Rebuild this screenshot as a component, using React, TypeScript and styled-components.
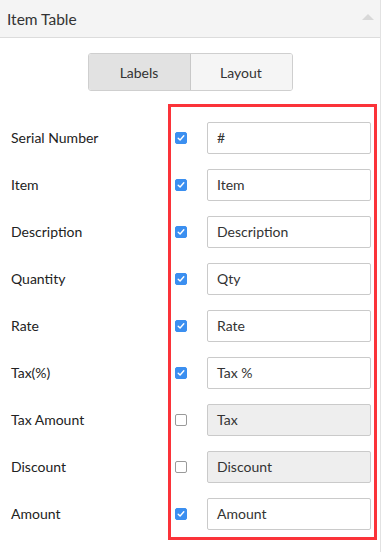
import { styled, createGlobalStyle } from "styled-components"

type Field = {
  label: string
  value: string
  enabled: boolean
}

const fields: Field[] = [
  { label: "Serial Number", value: "#", enabled: true },
  { label: "Item", value: "Item", enabled: true },
  { label: "Description", value: "Description", enabled: true },
  { label: "Quantity", value: "Qty", enabled: true },
  { label: "Rate", value: "Rate", enabled: true },
  { label: "Tax(%)", value: "Tax %", enabled: true },
  { label: "Tax Amount", value: "Tax", enabled: false },
  { label: "Discount", value: "Discount", enabled: false },
  { label: "Amount", value: "Amount", enabled: true },
]

const GlobalStyle = createGlobalStyle`
  body {
    margin: 0;
    background: #fff;
    font-family: Lato, "Open Sans", sans-serif;
    color: #222;
  }
`

const Panel = styled.div`
  width: 380px;
  min-height: 552px;
  border-right: 1px solid #e2e2e2;
  background: #fff;
`

const Header = styled.div`
  display: flex;
  align-items: center;
  justify-content: space-between;
  height: 37px;
  padding: 0 6px 0 7px;
  background: #f4f4f4;
  border-bottom: 1px solid #dcdcdc;
  font-size: 15.5px;
  color: #333;
`

const Caret = styled.span`
  width: 0;
  height: 0;
  border-left: 6px solid transparent;
  border-right: 6px solid transparent;
  border-bottom: 6px solid #d8d8d8;
  margin-bottom: 3px;
`

const Tabs = styled.div`
  display: flex;
  width: 203px;
  margin: 15px auto 0;
  border: 1px solid #cfcfcf;
  border-radius: 3px;
  overflow: hidden;
`

const Tab = styled.button<{ $active?: boolean }>`
  flex: 1;
  height: 36px;
  border: none;
  border-left: ${(p) => (p.$active ? "none" : "1px solid #c8c8c8")};
  background: ${(p) => (p.$active ? "#e2e2e2" : "#f5f5f5")};
  font-family: inherit;
  font-size: 14px;
  color: #333;
  padding: 0;
`

const Body = styled.div`
  display: flex;
  margin-top: 13px;
`

const LabelColumn = styled.div`
  flex: none;
  width: 157px;
  padding: 10px 0 0 11px;
`

const LabelRow = styled.div`
  display: flex;
  align-items: center;
  height: 47px;
  font-size: 14px;
  color: #222;
`

const Highlight = styled.div`
  flex: none;
  box-sizing: border-box;
  width: 209px;
  padding: 7px 3px 0 4px;
  border: 3px solid #fb3339;
`

const FieldRow = styled.div`
  display: flex;
  align-items: center;
  gap: 20px;
  height: 47px;
`

const Check = styled.span<{ $on: boolean }>`
  display: flex;
  align-items: center;
  justify-content: center;
  flex: none;
  width: 12px;
  height: 12px;
  box-sizing: border-box;
  border-radius: 2px;
  background: ${(p) => (p.$on ? "#3b8ff0" : "#fff")};
  border: 1px solid ${(p) => (p.$on ? "#3b8ff0" : "#9a9a9a")};
`

const TextBox = styled.div<{ $disabled: boolean }>`
  display: flex;
  align-items: center;
  width: 164px;
  height: 32px;
  box-sizing: border-box;
  padding: 0 9px;
  border: 1px solid #cacaca;
  border-radius: 2px;
  background: ${(p) => (p.$disabled ? "#eeeeee" : "#fff")};
  font-size: 14px;
  color: #333;
`

export default function App() {
  return (
    <>
      <GlobalStyle />
      <Panel>
        <Header>
          <span>Item Table</span>
          <Caret />
        </Header>
        <Tabs>
          <Tab $active>Labels</Tab>
          <Tab>Layout</Tab>
        </Tabs>
        <Body>
          <LabelColumn>
            {fields.map((f) => (
              <LabelRow key={f.label}>{f.label}</LabelRow>
            ))}
          </LabelColumn>
          <Highlight>
            {fields.map((f) => (
              <FieldRow key={f.label}>
                <Check $on={f.enabled}>
                  {f.enabled && (
                    <svg width="8" height="8" viewBox="0 0 8 8">
                      <path d="M1.2 4.2 L3.1 6 L6.8 1.8" fill="none" stroke="#fff" strokeWidth="1.4" strokeLinecap="round" strokeLinejoin="round" />
                    </svg>
                  )}
                </Check>
                <TextBox $disabled={!f.enabled}>{f.value}</TextBox>
              </FieldRow>
            ))}
          </Highlight>
        </Body>
      </Panel>
    </>
  )
}
